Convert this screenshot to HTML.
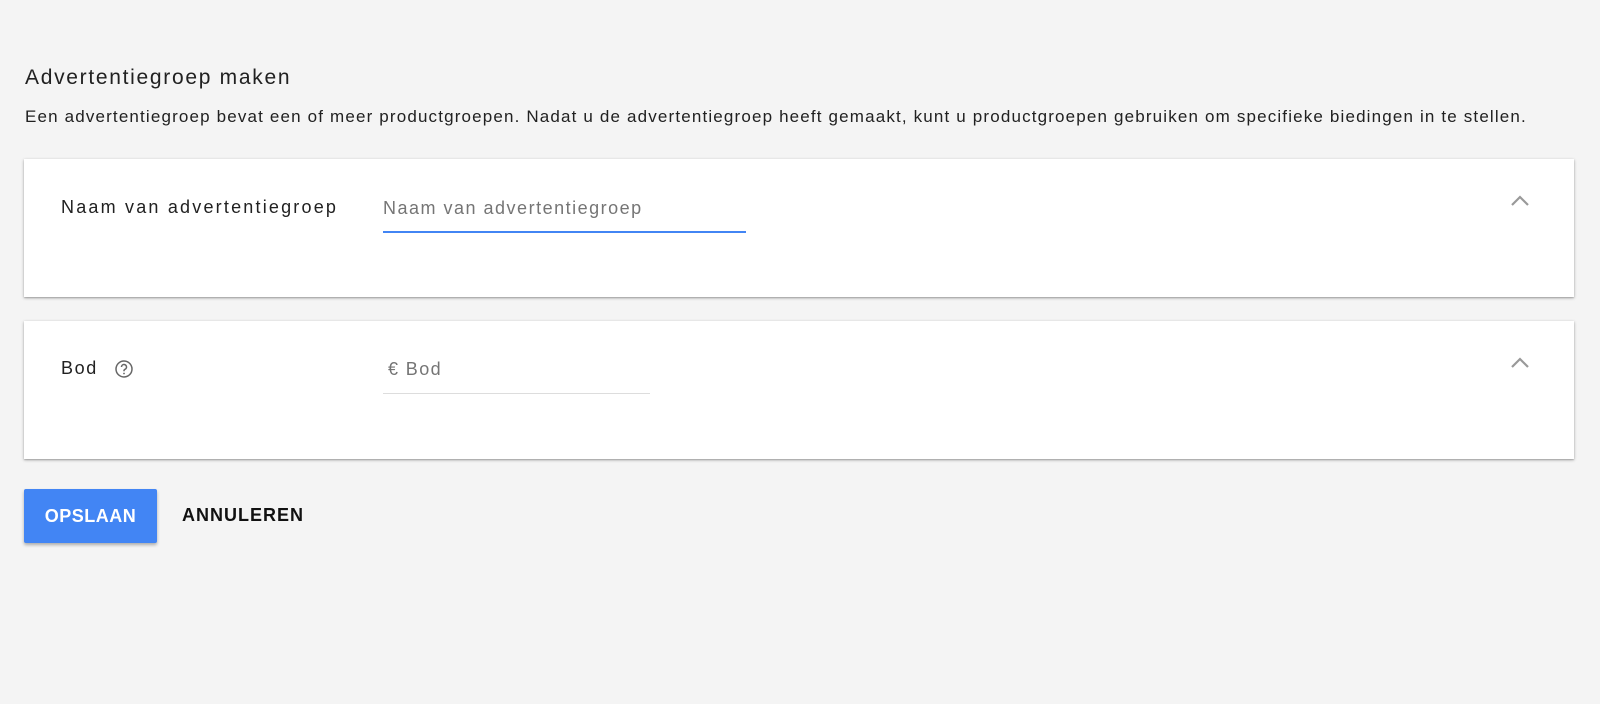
<!DOCTYPE html>
<html><head><meta charset="utf-8"><style>
*{margin:0;padding:0;box-sizing:border-box}
body{width:1600px;height:704px;background:#f4f4f4;font-family:"Liberation Sans",sans-serif;color:#202124;position:relative;overflow:hidden}
.abs{position:absolute;white-space:nowrap}
.card{position:absolute;left:24px;width:1550px;background:#fff;box-shadow:0 1px 3px rgba(0,0,0,.3),0 1px 1px rgba(0,0,0,.14)}
.chev{position:absolute;left:1509px}
</style></head><body>
<div class="abs" style="left:25px;top:66px;font-size:21px;color:#212121;letter-spacing:1.7px">Advertentiegroep maken</div>
<div class="abs" style="left:25px;top:107px;font-size:17px;color:#212121;letter-spacing:1.16px">Een advertentiegroep bevat een of meer productgroepen. Nadat u de advertentiegroep heeft gemaakt, kunt u productgroepen gebruiken om specifieke biedingen in te stellen.</div>

<div class="card" style="top:159px;height:138px"></div>
<div class="abs" style="left:61px;top:197px;font-size:18px;color:#212121;letter-spacing:2.2px">Naam van advertentiegroep</div>
<div class="abs" style="left:383px;top:198px;font-size:18px;color:#757575;letter-spacing:1.5px">Naam van advertentiegroep</div>
<div class="abs" style="left:383px;top:231px;width:363px;height:2px;background:#4285f4"></div>
<svg class="chev" style="top:194px" width="22" height="14" viewBox="0 0 22 14"><path d="M3 11 L11 3 L19 11" fill="none" stroke="#999" stroke-width="2.2"/></svg>

<div class="card" style="top:321px;height:138px"></div>
<div class="abs" style="left:61px;top:358px;font-size:18px;color:#212121;letter-spacing:1.6px">Bod</div>
<svg class="abs" style="left:114px;top:359px" width="20" height="20" viewBox="0 0 20 20"><circle cx="10" cy="10" r="8" fill="none" stroke="#666" stroke-width="1.5"/><path d="M7.5 8a2.5 2.5 0 1 1 3.5 2.3c-.7.3-1 .8-1 1.5v.5" fill="none" stroke="#666" stroke-width="1.5"/><circle cx="10" cy="14.5" r="0.9" fill="#666"/></svg>
<div class="abs" style="left:388px;top:359px;font-size:18px;color:#757575;letter-spacing:1.4px">€ Bod</div>
<div class="abs" style="left:383px;top:393px;width:267px;height:1px;background:#ddd"></div>
<svg class="chev" style="top:356px" width="22" height="14" viewBox="0 0 22 14"><path d="M3 11 L11 3 L19 11" fill="none" stroke="#999" stroke-width="2.2"/></svg>

<div class="abs" style="left:24px;top:489px;width:133px;height:54px;background:#4285f4;border-radius:2px;box-shadow:0 2px 3px rgba(0,0,0,.3);color:#fff;font-size:18px;font-weight:bold;line-height:54px;text-align:center;letter-spacing:0.5px">OPSLAAN</div>
<div class="abs" style="left:182px;top:505px;font-size:18px;font-weight:bold;color:#111;letter-spacing:1px">ANNULEREN</div>
</body></html>
